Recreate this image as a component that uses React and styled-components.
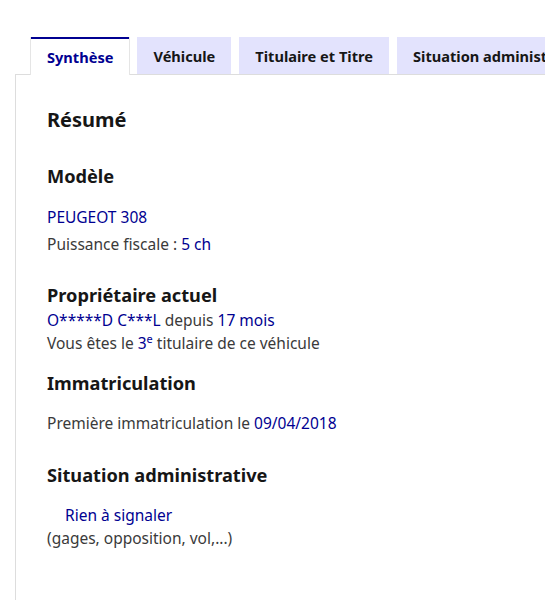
import styled, { createGlobalStyle, css } from 'styled-components'

const GlobalStyle = createGlobalStyle`
  body {
    margin: 0;
    background: #fff;
    font-family: "Noto Sans", "Open Sans", sans-serif;
    color: #3a3a3a;
  }
`

const Page = styled.div`
  padding: 37px 0 0 15px;
  overflow: hidden;
  height: 600px;
  box-sizing: border-box;
`

const TabList = styled.div`
  display: flex;
  gap: 8px;
  padding-left: 16px;
  border-bottom: 1px solid #ddd;
  white-space: nowrap;
`

const Tab = styled.div`
  flex: none;
  height: 37px;
  padding: 0 16px;
  display: flex;
  align-items: center;
  font-size: 14.6px;
  font-weight: 700;
  color: #161616;
  background: #e3e3fd;
  box-sizing: border-box;

  ${props => props.active && css`
    background: #fff;
    color: #000091;
    border-top: 2px solid #000091;
    height: 38px;
    margin-bottom: -1px;
    box-shadow: 1px 0 0 #e5e5e5, -1px 0 0 #e5e5e5;
  `}
`

const Panel = styled.div`
  border-left: 1px solid #ddd;
  padding: 31px 31px 0;
  height: 100%;
`

const Title = styled.h2`
  margin: 0 0 30px;
  font-size: 20px;
  line-height: 28px;
  font-weight: 700;
  color: #161616;
`

const Heading = styled.h3`
  margin: 0 0 ${props => props.after || '16px'};
  font-size: 18.2px;
  line-height: 24px;
  font-weight: 700;
  color: #161616;
`

const Line = styled.p`
  margin: 0 0 ${props => props.after || '0'};
  font-size: 15.5px;
  line-height: 23px;
  padding-left: ${props => props.indent || '0'};
`

const Value = styled.span`
  color: #000091;
`

const Sup = styled.sup`
  font-size: 11px;
  line-height: 0;
  vertical-align: 6px;
`

const Section = styled.section`
  margin-bottom: ${props => props.space || '28px'};
`

const tabs = ['Synthèse', 'Véhicule', 'Titulaire et Titre', 'Situation administrative']

export default function App() {
  return (
    <>
      <GlobalStyle />
      <Page>
        <TabList>
          {tabs.map((t, i) => (
            <Tab key={t} active={i === 0}>{t}</Tab>
          ))}
        </TabList>
        <Panel>
          <Title>Résumé</Title>
          <Section space="27px">
            <Heading after="18px">Modèle</Heading>
            <Line after="4px"><Value>PEUGEOT 308</Value></Line>
            <Line>Puissance fiscale : <Value>5 ch</Value></Line>
          </Section>
          <Section space="16px">
            <Heading after="2px">Propriétaire actuel</Heading>
            <Line><Value>O*****D C***L</Value> depuis <Value>17 mois</Value></Line>
            <Line>Vous êtes le <Value>3<Sup>e</Sup></Value> titulaire de ce véhicule</Line>
          </Section>
          <Section space="28px">
            <Heading after="17px">Immatriculation</Heading>
            <Line>Première immatriculation le <Value>09/04/2018</Value></Line>
          </Section>
          <Section>
            <Heading after="17px">Situation administrative</Heading>
            <Line indent="18px"><Value>Rien à signaler</Value></Line>
            <Line>(gages, opposition, vol,...)</Line>
          </Section>
        </Panel>
      </Page>
    </>
  )
}
